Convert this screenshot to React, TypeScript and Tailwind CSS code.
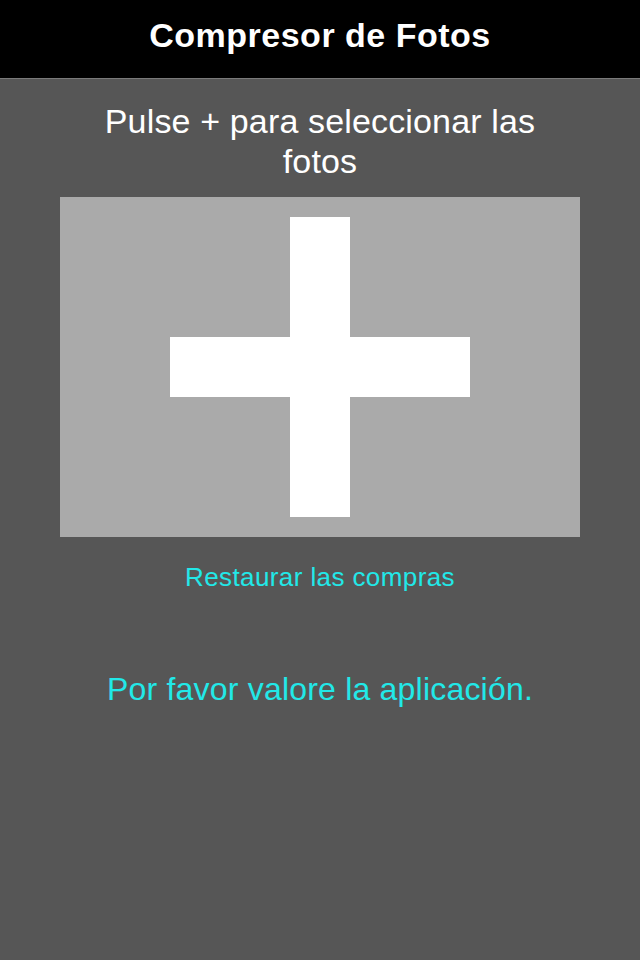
function App() {
  return (
    <div
      className="w-[640px] h-[960px] bg-[#565656] flex flex-col items-center"
      style={{ fontFamily: '"Liberation Sans", Arial, sans-serif' }}
    >
      <div className="w-full h-[79px] bg-black border-b border-[#7a7a7a] flex items-center justify-center">
        <h1 className="text-white text-[34px] font-bold leading-none tracking-[0.5px] -mt-[8px]">
          Compresor de Fotos
        </h1>
      </div>
      <p className="mt-[22px] w-[470px] text-center text-white text-[34px] leading-[40px] tracking-[0.15px]">
        Pulse + para seleccionar las fotos
      </p>
      <button className="mt-[16px] w-[520px] h-[340px] bg-[#aaaaaa] flex items-center justify-center">
        <svg width="300" height="300" viewBox="0 0 300 300">
          <rect x="120" y="0" width="60" height="300" fill="#fff" />
          <rect x="0" y="120" width="300" height="60" fill="#fff" />
        </svg>
      </button>
      <span className="mt-[26px] text-[#22e8e8] text-[26px] leading-[28px] tracking-[0.4px]">
        Restaurar las compras
      </span>
      <span className="mt-[80px] text-[#22e8e8] text-[32px] leading-[36px] tracking-[0.2px]">
        Por favor valore la aplicación.
      </span>
    </div>
  );
}

export default App;
